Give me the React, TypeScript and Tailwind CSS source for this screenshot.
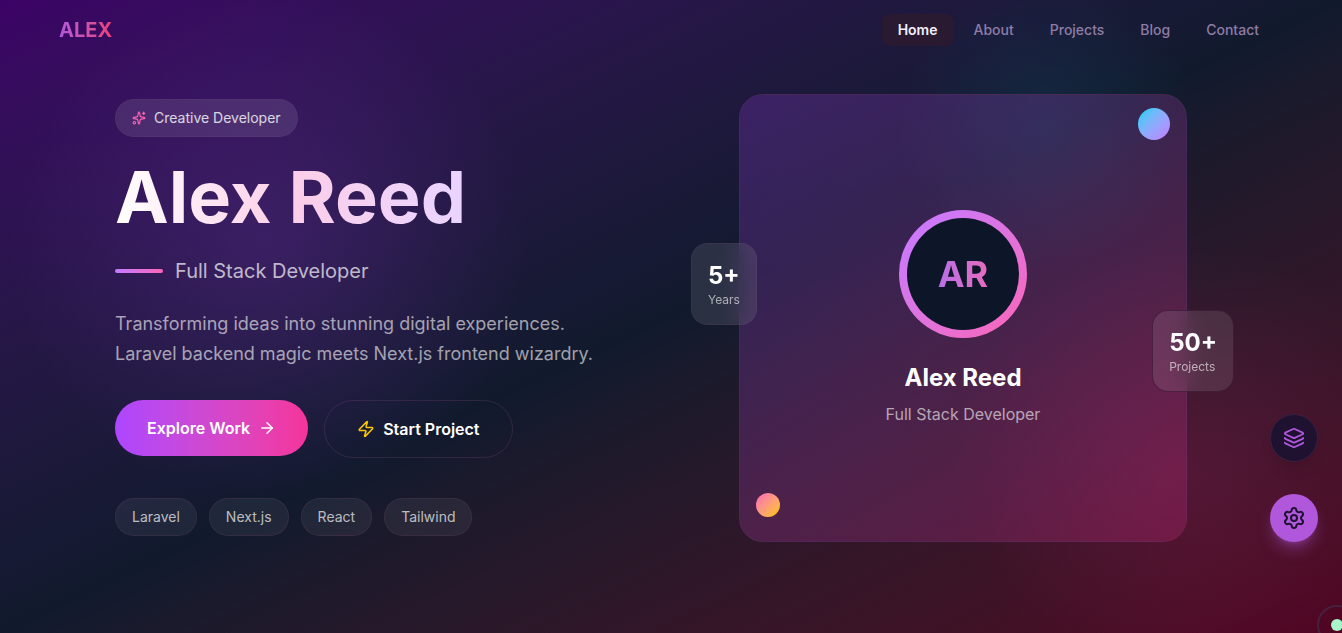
import React from 'react';
import { ArrowRight, Layers, Settings, Sparkles, Zap } from 'lucide-react';

const navItems = ['Home', 'About', 'Projects', 'Blog', 'Contact'];
const skills = ['Laravel', 'Next.js', 'React', 'Tailwind'];

const Navbar = () => (
  <header className="flex h-[60px] items-center justify-between pl-[59px] pr-[67px]">
    <a href="#" className="bg-gradient-to-r from-[#b057dc] to-[#ec4079] bg-clip-text text-xl font-bold text-transparent">
      ALEX
    </a>
    <nav className="flex gap-1">
      {navItems.map((item, index) => (
        <a
          key={item}
          href={`#${item.toLowerCase()}`}
          className={
            index === 0
              ? 'rounded-lg bg-[#291a31] px-4 py-1.5 text-sm font-semibold text-[#f3eefa]'
              : 'rounded-lg px-4 py-1.5 text-sm font-medium text-[#8f7ca6]'
          }
        >
          {item}
        </a>
      ))}
    </nav>
  </header>
);

const Intro = () => (
  <div className="flex flex-col items-start pb-0.5">
    <div className="flex items-center gap-2 rounded-full border border-[#a05a78]/10 bg-white/10 px-4 py-2 text-sm text-white/80">
      <Sparkles size={14} className="text-pink-400" />
      <span>Creative Developer</span>
    </div>

    <h1 className="mt-6 bg-gradient-to-r from-white via-pink-200 to-purple-200 bg-clip-text text-7xl leading-none font-bold text-transparent">
      Alex Reed
    </h1>

    <div className="mt-6 flex items-center gap-3">
      <div className="h-1 w-12 rounded-full bg-gradient-to-r from-purple-400 to-pink-400"></div>
      <p className="text-xl text-white/70">Full Stack Developer</p>
    </div>

    <p className="mt-6 max-w-lg text-lg leading-[30px] text-white/60">
      Transforming ideas into stunning digital experiences. Laravel backend magic meets Next.js frontend wizardry.
    </p>

    <div className="mt-[31px] flex items-start gap-4">
      <button className="flex items-center gap-2 rounded-full bg-gradient-to-r from-[#ad46ff] to-[#f6339a] px-8 py-4 font-semibold text-white">
        Explore Work
        <ArrowRight size={18} />
      </button>
      <button className="flex items-center gap-2 rounded-full border border-[#a05a96]/20 px-8 py-4 font-semibold text-white">
        <Zap size={18} className="text-yellow-400" />
        Start Project
      </button>
    </div>

    <ul className="mt-10 flex gap-3">
      {skills.map((skill) => (
        <li
          key={skill}
          className="rounded-full border border-[#a05a78]/15 bg-white/[0.06] px-4 py-2 text-sm text-white/70"
        >
          {skill}
        </li>
      ))}
    </ul>
  </div>
);

const ProfileCard = () => (
  <div className="relative mx-auto flex aspect-square w-full max-w-md flex-col items-center justify-center rounded-3xl border border-[#a05a78]/10 bg-gradient-to-br from-purple-500/20 to-pink-500/20">
    <div className="size-32 rounded-full bg-gradient-to-br from-purple-400 to-pink-400 p-2">
      <div className="flex size-full items-center justify-center rounded-full bg-[#0d1628]">
        <span className="bg-gradient-to-r from-[#b86ee6] to-[#e66bbd] bg-clip-text text-4xl font-bold text-transparent">
          AR
        </span>
      </div>
    </div>
    <h2 className="mt-6 text-2xl font-bold text-white">Alex Reed</h2>
    <p className="mt-2 text-white/60">Full Stack Developer</p>

    <div className="absolute top-[13px] right-4 size-8 rounded-full bg-gradient-to-br from-cyan-400 to-purple-400"></div>
    <div className="absolute bottom-6 left-4 size-6 rounded-full bg-gradient-to-br from-pink-400 to-yellow-400"></div>

    <div className="absolute top-[148px] -left-[49px] rounded-2xl border border-[#a05a78]/10 bg-white/10 p-4 backdrop-blur-md">
      <div className="text-2xl font-bold text-white">5+</div>
      <div className="text-xs text-white/60">Years</div>
    </div>
    <div className="absolute -right-12 bottom-[149px] rounded-2xl border border-[#32142d]/60 bg-white/10 p-4 backdrop-blur-md">
      <div className="text-2xl font-bold text-white">50+</div>
      <div className="text-xs text-white/60">Projects</div>
    </div>
  </div>
);

// Soft colour spots behind the page content
const Glow = () => (
  <div className="pointer-events-none absolute inset-0 -z-10 overflow-hidden bg-[radial-gradient(circle_at_20%_38%,rgba(173,70,255,0.17),transparent_260px),radial-gradient(circle_at_78%_20%,rgba(0,184,219,0.09),transparent_150px),radial-gradient(circle_at_88%_74%,rgba(246,51,154,0.13),transparent_230px)]"></div>
);

export default function App() {
  return (
    <div className="relative isolate min-h-screen overflow-hidden bg-gradient-to-br from-purple-950 via-[#111a2d] to-[#4f0422] font-[Inter,sans-serif]">
      <Glow />
      <Navbar />
      <main className="mx-auto grid max-w-6xl grid-cols-2 items-center gap-14 px-5 py-[34px]">
        <Intro />
        <ProfileCard />
      </main>

      <div className="fixed right-6 bottom-[91px] flex flex-col items-center gap-8">
        <button
          aria-label="Layers"
          className="flex size-12 items-center justify-center rounded-full border border-[#3a2140] bg-[#1e1230] text-[#b057dc] shadow-lg"
        >
          <Layers size={22} />
        </button>
        <button
          aria-label="Settings"
          className="flex size-12 items-center justify-center rounded-full bg-[#b057dc] text-[#1e1230] shadow-lg shadow-[#b057dc]/40"
        >
          <Settings size={24} />
        </button>
      </div>

      {/* Custom cursor */}
      <div className="pointer-events-none fixed -right-[15px] -bottom-3 flex size-10 items-center justify-center rounded-full border-2 border-[#47203f]">
        <div className="size-3 rounded-full bg-[#a9f5cb]"></div>
      </div>
    </div>
  );
}
